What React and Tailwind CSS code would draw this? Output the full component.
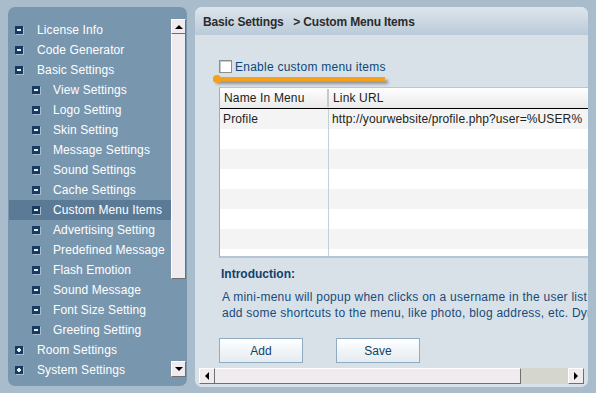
import React from "react";

const font = { fontFamily: '"Liberation Sans", Arial, sans-serif' };

function Icon({ plus }) {
  return (
    <div className="relative w-[8px] h-[8px] bg-[#173b60] shadow-[1px_1px_0_#a9bccd] flex items-center justify-center shrink-0">
      <div className="w-[4px] h-[2px] bg-[#e8eef3]" />
      {plus && <div className="absolute w-[2px] h-[4px] bg-[#e8eef3]" />}
    </div>
  );
}

const items = [
  ["License Info", 0],
  ["Code Generator", 0],
  ["Basic Settings", 0],
  ["View Settings", 1],
  ["Logo Setting", 1],
  ["Skin Setting", 1],
  ["Message Settings", 1],
  ["Sound Settings", 1],
  ["Cache Settings", 1],
  ["Custom Menu Items", 1, true],
  ["Advertising Setting", 1],
  ["Predefined Message", 1],
  ["Flash Emotion", 1],
  ["Sound Message", 1],
  ["Font Size Setting", 1],
  ["Greeting Setting", 1],
  ["Room Settings", 0, false, true],
  ["System Settings", 0, false, true],
];

function Arrow({ dir }) {
  const cls =
    dir === "up"
      ? "border-l-[4px] border-r-[4px] border-b-[4px] border-l-transparent border-r-transparent border-b-black"
      : dir === "down"
      ? "border-l-[4px] border-r-[4px] border-t-[4px] border-l-transparent border-r-transparent border-t-black"
      : dir === "left"
      ? "border-t-[4px] border-b-[4px] border-r-[4px] border-t-transparent border-b-transparent border-r-black"
      : "border-t-[4px] border-b-[4px] border-l-[4px] border-t-transparent border-b-transparent border-l-black";
  return <div className={"w-0 h-0 " + cls} />;
}

function SBtn({ dir, className = "" }) {
  return (
    <div
      className={
        "bg-[#efebef] border-t border-l border-t-white border-l-white border-r border-b border-r-[#6f6f6f] border-b-[#6f6f6f] flex items-center justify-center shrink-0 " +
        className
      }
    >
      <Arrow dir={dir} />
    </div>
  );
}

export default function App() {
  return (
    <div
      className="w-[596px] h-[393px] bg-[#a9bccc] flex items-start overflow-hidden text-[12px]"
      style={font}
    >
      {/* Left panel */}
      <div className="ml-[8px] mt-[7px] w-[179px] h-[379px] bg-[#7896ae] rounded-[7px] flex">
        <div className="w-[163px] pl-[1px] pt-[13px] flex flex-col">
          {items.map(([label, lvl, active, plus]) => (
            <div
              key={label}
              className={
                "h-[20px] flex items-center text-white whitespace-nowrap " +
                (active ? "bg-[#5b7a95] " : "") +
                (lvl ? "pl-[23px] gap-[13px]" : "pl-[6px] gap-[14px]")
              }
            >
              <Icon plus={plus} />
              <span className="tracking-[0.1px]">{label}</span>
            </div>
          ))}
        </div>
        <div className="w-[15px] pt-[12px] flex flex-col">
          <SBtn dir="up" className="h-[15px]" />
          <div className="h-[245px] bg-[#efebef] border-l border-l-white border-r border-b border-r-[#6f6f6f] border-b-[#6f6f6f]" />
          <div className="flex-1" />
          <SBtn dir="down" className="h-[16px] mb-[9px]" />
        </div>
      </div>

      {/* Right panel */}
      <div className="ml-[8px] mt-[7px] w-[393px] h-[380px] bg-[#d9e1e8] rounded-[7px] flex flex-col overflow-hidden">
        <div className="h-[28px] shrink-0 bg-gradient-to-b from-[#dde6ed] to-[#bacad8] flex items-center pl-[8px] pt-[2px] font-bold text-[#2b2b2b] whitespace-pre tracking-[-0.15px]">
          Basic Settings{"   "}&gt; Custom Menu Items
        </div>
        <div className="flex-1 overflow-hidden pl-[24px] pt-[25px] flex flex-col">
          <div className="flex items-center h-[13px] gap-[3px]">
            <div className="w-[13px] h-[13px] bg-white border border-[#8d8d8d] shadow-[inset_1px_1px_0_#c8c8c8]" />
            <span className="text-[#0b4878] whitespace-nowrap tracking-[0.25px]">Enable custom menu items</span>
          </div>
          <div className="relative h-[14px] -ml-[6px]">
            <div className="absolute top-[4px] left-[0px] w-[172px] h-[4px] bg-[#f7a01b] shadow-[3px_3px_3px_rgba(0,0,0,0.35)]" />
            <div className="absolute top-[2px] left-[0px] w-[8px] h-[8px] rounded-full bg-[#f7a01b]" />
          </div>
          {/* table */}
          <div className="w-[420px] shrink-0 border-l border-l-[#98aec2] border-t border-t-[#b6c6d4] border-b-2 border-b-[#b4c5d3] bg-white">
            <div className="h-[21px] flex bg-gradient-to-b from-white to-[#e9e9e9] border-b border-b-black text-[#222]">
              <div className="w-[107px] pl-[4px] flex items-center tracking-[0.15px]">Name In Menu</div>
              <div className="w-[2px] bg-[#c9c9c9] my-[1px]" />
              <div className="flex-1 pl-[4px] flex items-center tracking-[0.15px]">Link URL</div>
            </div>
            {Array.from({ length: 8 }).map((_, i) => (
              <div
                key={i}
                className={
                  "flex text-[#222] " +
                  (i === 7 ? "h-[7px] " : "h-[20px] ") +
                  (i % 2 === 0 ? "bg-[#f4f4f4]" : "bg-white")
                }
              >
                <div className="w-[108px] pl-[3px] flex items-center tracking-[0.15px]">{i === 0 ? "Profile" : ""}</div>
                <div className="w-[1px] bg-[#c3cfd9]" />
                <div className="flex-1 pl-[3px] flex items-center whitespace-nowrap tracking-[0.12px]">
                  {i === 0 ? "http://yourwebsite/profile.php?user=%USER%" : ""}
                </div>
              </div>
            ))}
          </div>
          <div className="mt-[8px] pl-[2px] font-bold text-[#11406a] h-[16px] flex items-center">Introduction:</div>
          <div className="mt-[7px] pl-[3px] text-[#174b7a] leading-[16px] whitespace-nowrap tracking-[0.25px]">
            <div>A mini-menu will popup when clicks on a username in the user list</div>
            <div>add some shortcuts to the menu, like photo, blog address, etc. Dyn</div>
          </div>
          <div className="mt-[17px] flex gap-[33px]">
            <div className="w-[84px] h-[25px] border border-[#8eabc2] bg-gradient-to-b from-white to-[#e4ebf1] flex items-center justify-center text-[#123f68]">Add</div>
            <div className="w-[84px] h-[25px] border border-[#8eabc2] bg-gradient-to-b from-white to-[#e4ebf1] flex items-center justify-center text-[#123f68]">Save</div>
          </div>
        </div>
        {/* horizontal scrollbar */}
        <div className="h-[16px] mx-[4px] mb-[3px] mt-[5px] flex shrink-0">
          <SBtn dir="left" className="w-[16px]" />
          <div className="w-[306px] bg-[#efebef] border-t border-t-white border-r border-b border-r-[#6f6f6f] border-b-[#6f6f6f]" />
          <div className="flex-1 bg-[#d5d6cd]" />
          <SBtn dir="right" className="w-[16px]" />
        </div>
      </div>
    </div>
  );
}
